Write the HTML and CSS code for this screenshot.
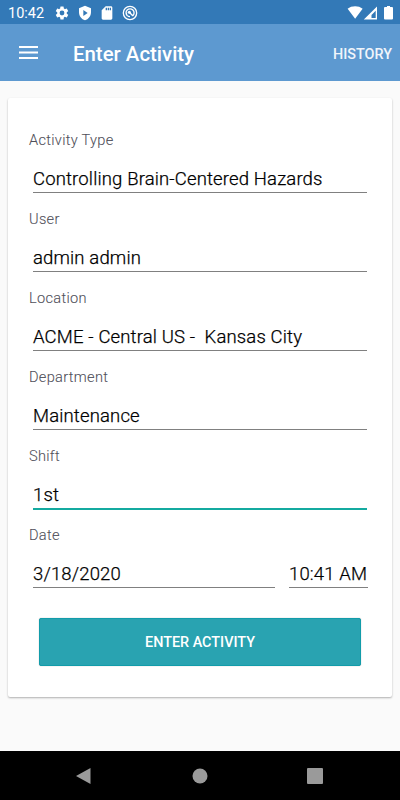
FILE: index.html
```html
<!DOCTYPE html>
<html lang="en">
<head>
<meta charset="utf-8">
<title>Enter Activity</title>
<link rel="stylesheet" href="styles.css">
</head>
<body>
<div class="screen">
  <div class="status">
    <span class="clock">10:42</span>
    <div class="notices">
      <svg width="16" height="16" viewBox="0 0 24 24"><path d="M19.14 12.94c.04-.3.06-.61.06-.94s-.02-.64-.07-.94l2.03-1.58a.49.49 0 0 0 .12-.61l-1.92-3.32a.49.49 0 0 0-.59-.22l-2.39.96a7 7 0 0 0-1.62-.94l-.36-2.54A.48.48 0 0 0 13.92 2.400h-3.84a.48.48 0 0 0-.48.41l-.36 2.54a7 7 0 0 0-1.620.94l-2.39-.96a.48.48 0 0 0-.59.22L2.720 8.870a.48.48 0 0 0 .12.61l2.030 1.580a7 7 0 0 0 0 1.880l-2.030 1.580a.49.49 0 0 0-.12.61l1.920 3.320c.12.22.37.29.59.22l2.390-.96c.5.38 1.030.7 1.620.94l.36 2.540c.05.24.24.41.48.41h3.840c.24 0 .44-.17.47-.41l.36-2.540a7 7 0 0 0 1.620-.94l2.390.96c.22.08.47 0 .59-.22l1.920-3.320a.48.48 0 0 0-.12-.61zM12 15.600a3.600 3.600 0 1 1 0-7.200 3.600 3.600 0 0 1 0 7.200z"/></svg>
      <svg width="16" height="16" viewBox="0 0 24 24"><path fill-rule="evenodd" d="M12 1 3 5v6c0 5.550 3.840 10.740 9 12 5.160-1.260 9-6.450 9-12V5zM9.500 7.500v9l6.500-4.500z"/></svg>
      <svg width="16" height="16" viewBox="0 0 24 24"><path d="M18 2h-8L4 8v12c0 1.100.9 2 2 2h12c1.100 0 2-.9 2-2V4c0-1.100-.9-2-2-2zm-6 6h-2V4h2zm3 0h-2V4h2zm3 0h-2V4h2z"/></svg>
      <svg width="16" height="16" viewBox="0 0 24 24"><g class="ring"><circle cx="12" cy="12" r="10"/><path d="M8 16.200A6 6 0 1 1 16.200 16.200M16.500 16.500l-6-6M6.500 12a5.500 5.500 0 0 0 5.500 5.500"/></g><circle cx="11" cy="11" r="2.300"/></svg>
    </div>
    <svg class="signals" width="48" height="16" viewBox="0 0 48 16"><path d="M.6 3.800C4.600.5 11.600.5 15.600 3.800L8.100 13.700z"/><path fill-rule="evenodd" d="M30 1.600v12.900H16.800zM28.700 5.800l-4.200 4.200V13h4.200z"/><path d="M38 2h2V1h3v1h2q1 0 1 1v10.500q0 1-1 1h-7q-1 0-1-1V3q0-1 1-1z"/></svg>
  </div>
  <header class="appbar">
    <svg class="menu" width="20" height="14" viewBox="0 0 20 14"><path d="M0 0h19v2H0zm0 5.500h19v2H0zm0 5.500h19v2H0z"/></svg>
    <h1>Enter Activity</h1>
    <span class="history">HISTORY</span>
  </header>
  <main>
    <form class="card">
      <div class="field"><div class="label">Activity Type</div><div class="value">Controlling Brain-Centered Hazards</div></div>
      <div class="field"><div class="label">User</div><div class="value">admin admin</div></div>
      <div class="field"><div class="label">Location</div><div class="value">ACME - Central US -&nbsp; Kansas City</div></div>
      <div class="field"><div class="label">Department</div><div class="value">Maintenance</div></div>
      <div class="field"><div class="label">Shift</div><div class="value focused">1st</div></div>
      <div class="field"><div class="label">Date</div><div class="pair"><div class="value date">3/18/2020</div><div class="value time">10:41 AM</div></div></div>
      <button type="button" class="submit">ENTER ACTIVITY</button>
    </form>
  </main>
  <nav class="navbar">
    <svg width="16" height="18" viewBox="0 0 16 18"><path d="M14.500 1v16L0 9z"/></svg>
    <svg width="16" height="16" viewBox="0 0 16 16"><circle cx="8" cy="8" r="7.500"/></svg>
    <svg width="16" height="16" viewBox="0 0 16 16"><rect width="16" height="16" rx="1"/></svg>
  </nav>
</div>
</body>
</html>
```
FILE: styles.css
```css
* { box-sizing: border-box; }
body { margin: 0; font-family: Roboto, sans-serif; background: #fafafa; }
svg { display: block; fill: #fff; }
.screen { width: 400px; height: 800px; display: flex; flex-direction: column; }
.status { height: 24px; background: #3379b7; color: #fff; display: flex; align-items: center; padding: 1px 8px 0; }
.clock { width: 46px; padding-top: 1px; font-size: 14.500px; line-height: 23px; white-space: nowrap; }
.notices { display: flex; gap: 6.700px; }
.ring { fill: none; stroke: #fff; stroke-width: 2; }
.signals { margin-left: auto; margin-right: -3px; width: 48px; }
.appbar { height: 57px; background: #5d99d0; color: #fff; display: flex; align-items: center; padding: 2px 8px 0 19px; }
.menu { margin-top: -2px; }
h1 { margin: 1px 0 0 34px; font-size: 20.400px; font-weight: 500; line-height: 28px; white-space: nowrap; }
.history { margin: 1px 0 0 auto; font-size: 14.400px; font-weight: 500; color: #f0f5fb; }
main { flex: 1; padding: 17px 8px 0; }
.card { height: 599px; padding: 32px 24px 0 21px; background: #fff; border-radius: 2px; box-shadow: 0 1px 2px rgba(0,0,0,.3); }
.field { height: 79px; }
.label { height: 20px; line-height: 21px; font-size: 14.600px; font-weight: 300; -webkit-text-stroke: .1px #50505a; color: #50505a; letter-spacing: .3px; white-space: nowrap; }
.value { height: 43px; margin: 0 1px 0 4px; padding-top: 17px; font-size: 18.500px; font-weight: 300; -webkit-text-stroke: .25px #000; line-height: 24px; color: #000; letter-spacing: .15px; border-bottom: 1px solid #808080; white-space: pre; }
.focused { height: 44px; border-bottom: 2px solid #14aaa0; }
.pair { display: flex; gap: 14px; margin-left: 4px; }
.pair .value { margin: 0; }
.date { width: 242px; }
.time { width: 79px; }
.submit { display: block; width: 322px; height: 48px; margin: 14px 0 0 10px; padding: 1px 0 0; border: 1px solid #129caa; border-radius: 2px; background: #29a3b1; color: #fff; font: 500 14.400px/46px Roboto, sans-serif; box-shadow: 0 0 1px rgba(0,0,0,.4); }
.navbar { height: 49px; background: #000; display: flex; align-items: center; justify-content: space-between; padding: 0 77px 0 76px; }
.navbar svg { fill: #9a9a9a; }
```
